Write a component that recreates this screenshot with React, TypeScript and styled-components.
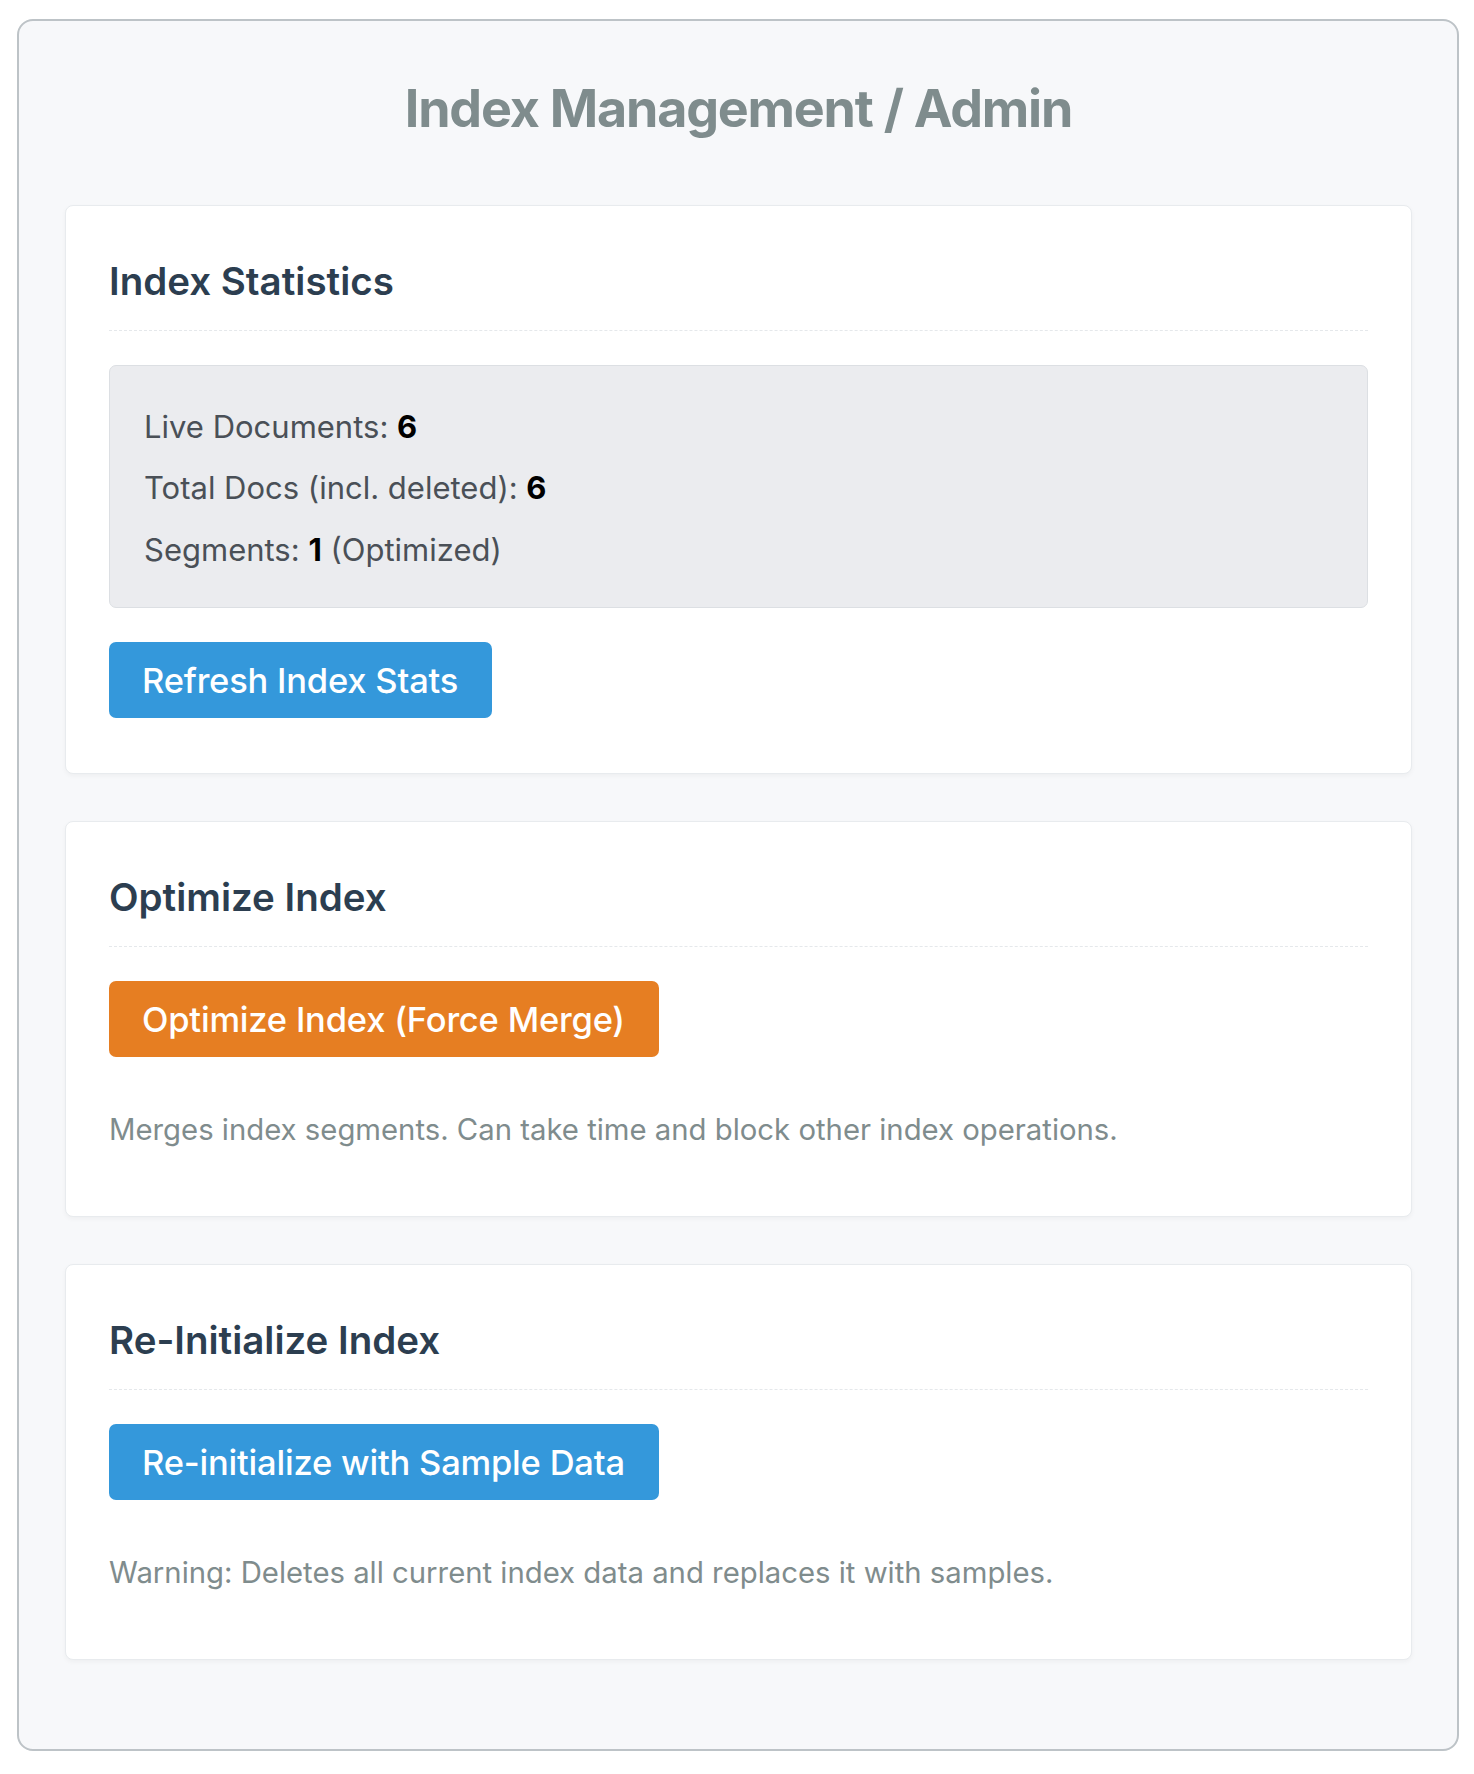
import React from "react";
import styled, { createGlobalStyle } from "styled-components";

const GlobalStyle = createGlobalStyle`
  html, body {
    margin: 0;
    padding: 0;
    background: #ffffff;
  }
  body {
    font-family: Inter, "Noto Sans", "Liberation Sans", sans-serif;
    -webkit-font-smoothing: antialiased;
  }
  * { box-sizing: border-box; }
`;

const Panel = styled.div`
  margin: 19px 15px 25px 17px;
  background: #f7f8fa;
  border: 2px solid #bdc3c7;
  border-radius: 16px;
  padding: 45px 45px 89px 46px;
  display: flex;
  flex-direction: column;
`;

const Title = styled.h1`
  margin: 12px 0 65px;
  text-align: center;
  font-size: 52px;
  line-height: 1.2;
  font-weight: 700;
  letter-spacing: -1.2px;
  color: #7f8c8d;
`;

const Cards = styled.div`
  display: flex;
  flex-direction: column;
  gap: 47px;
`;

const Card = styled.section`
  background: #ffffff;
  border: 1px solid #e8ebee;
  border-radius: 8px;
  box-shadow: 0 2px 5px rgba(0, 0, 0, 0.04);
  padding: 44px 43px;
  display: flex;
  flex-direction: column;
  align-items: flex-start;
`;

const CardHeading = styled.h2`
  align-self: stretch;
  margin: 8px 0 34px;
  padding-bottom: 26px;
  border-bottom: 1.5px dashed #e5e8eb;
  font-size: 38.5px;
  line-height: 46px;
  font-weight: 600;
  letter-spacing: 0;
  color: #2c3e50;
`;

const StatsBox = styled.div`
  align-self: stretch;
  background: #ebecef;
  border: 1px solid #dcdfe3;
  border-radius: 7px;
  padding: 39.5px 34px 36.5px;
  display: flex;
  flex-direction: column;
  gap: 19.5px;
  margin-bottom: 34px;
`;

const StatLine = styled.p`
  margin: 0;
  font-size: 31px;
  line-height: 42px;
  color: #4a5057;
`;

const StatValue = styled.strong`
  font-weight: 700;
  color: #000000;
`;

const ActionButton = styled.button<{ $variant: "primary" | "warning" }>`
  margin: 0 0 11px;
  height: 76px;
  padding: 0 34px 0 33px;
  border: none;
  border-radius: 7px;
  background: ${(p) => (p.$variant === "warning" ? "#e67e22" : "#3498db")};
  color: #ffffff;
  font-family: inherit;
  font-size: 34.5px;
  font-weight: 500;
  letter-spacing: -0.2px;
  cursor: pointer;
`;

const Note = styled.p`
  margin: 42px 0 23px;
  font-size: 29.3px;
  line-height: 39px;
  color: #7f8c8d;
`;

export default function App() {
  return (
    <>
      <GlobalStyle />
      <Panel>
        <Title>Index Management / Admin</Title>
        <Cards>
          <Card>
            <CardHeading>Index Statistics</CardHeading>
            <StatsBox>
              <StatLine>
                Live Documents: <StatValue>6</StatValue>
              </StatLine>
              <StatLine>
                Total Docs (incl. deleted): <StatValue>6</StatValue>
              </StatLine>
              <StatLine>
                Segments: <StatValue>1</StatValue> (Optimized)
              </StatLine>
            </StatsBox>
            <ActionButton $variant="primary">Refresh Index Stats</ActionButton>
          </Card>
          <Card>
            <CardHeading>Optimize Index</CardHeading>
            <ActionButton $variant="warning">Optimize Index (Force Merge)</ActionButton>
            <Note>Merges index segments. Can take time and block other index operations.</Note>
          </Card>
          <Card>
            <CardHeading>Re-Initialize Index</CardHeading>
            <ActionButton $variant="primary">Re-initialize with Sample Data</ActionButton>
            <Note>Warning: Deletes all current index data and replaces it with samples.</Note>
          </Card>
        </Cards>
      </Panel>
    </>
  );
}
